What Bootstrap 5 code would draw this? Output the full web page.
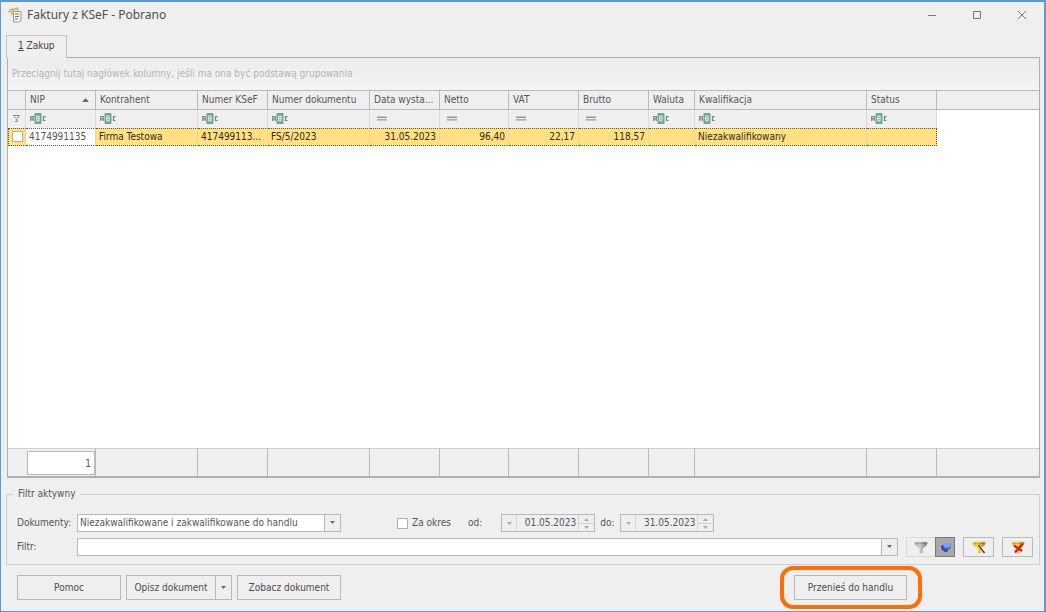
<!DOCTYPE html>
<html lang="pl">
<head>
<meta charset="utf-8">
<meta name="viewport" content="width=device-width, initial-scale=1">
<title>Faktury z KSeF - Pobrano</title>
<link href="https://cdn.jsdelivr.net/npm/bootstrap@5.3.0/dist/css/bootstrap.min.css" rel="stylesheet">
<style>
:root{--face:#efefef;--line:#b9b9b9;--ink:#555}
body{font:10px/14px "DejaVu Sans Condensed","DejaVu Sans",sans-serif;color:var(--ink);background:var(--face)}
.window{background:var(--face);border:1px solid #5b9bd0;border-top-width:2px;border-right-width:2px;min-height:100vh}
.titlebar{height:25px;padding:0 0 0 7px}
.titlebar h1{font:12px/16px "Noto Sans",sans-serif;color:#505050}
.titlebar button{width:45px;height:25px;border:0;background:none;padding:0}
.tabs{padding-left:5px;margin-bottom:-1px;position:relative;z-index:1}
.tabs .nav-link{border:1px solid #c4c4c4;border-bottom:0;border-radius:0;background:var(--face);color:#444;padding:0 11px;width:61px;height:23px;line-height:20px;white-space:nowrap}
.grid-box{border:1px solid #b0b0b0;border-bottom-width:2px;background:#fff;margin:0 4px 0 6px}
.group-panel{height:32px;line-height:32px;padding-left:4px;color:#b4b4b4;background:linear-gradient(#ececec,#f4f4f4)}
.data-grid{table-layout:fixed;width:100%;border-collapse:separate;border-spacing:0}
.data-grid th,.data-grid td{font-weight:400;padding:0 3px;white-space:nowrap;overflow:hidden;text-overflow:ellipsis}
.data-grid thead th{height:20px;background:var(--face);border:solid var(--line);border-width:1px 1px 1px 0;padding:0 2px 1px 4px}
.data-grid thead th:last-child{border-right:0}
.filter-row td{height:18px;background:var(--face);border-right:1px solid #dadada;padding-left:4px;padding-bottom:1px;line-height:0}
.filter-row td:last-child,.picked td:last-child{background:#fff;border:0}
.picked td{height:18px;color:#33290f;background:#ffe083;border-right:1px solid #e8d7a0;border-top:1px dotted #6b5a20;border-bottom:1px dotted #6b5a20;padding-bottom:1px}
.picked td.focus-cell{background:#fff;color:var(--ink)}
.picked td:nth-last-child(2){border-right:1px dotted #6b5a20}
.picked td:first-child{border-left:1px dotted #6b5a20}
.sum-row td{height:28px;background:var(--face);border-right:1px solid var(--line);border-top:1px solid #cfcfcf}
.sum-row td:last-child{border-right:0}
.sum-row td.sum-cell{padding:0 0 0 1px}
.sum-value{display:block;height:24px;line-height:23px;border:1px solid var(--line);background:#fff;text-align:right;padding-right:3px}
.tick{appearance:none;width:11px;height:11px;margin:0;border:1px solid #b0b0b0;background:#fff;flex:none;display:block}
.tick:checked{background:#5b9bd0}
.filters{border:1px solid #d0d0d0;margin:9px 4px 0 5px;padding:0 6px 7px 10px}
.filters legend{float:none;width:auto;font-size:10px;line-height:14px;margin:-1px 0 0 -4px;padding:0 5px 0 5px}
.docs-row{margin:13px 0 5px}
.field-label{width:60px;flex:none}
.pick{appearance:none;height:18px;border:1px solid var(--line);border-radius:0;color:var(--ink);padding:0 18px 0 2px;background:#fff url("data:image/svg+xml,%3Csvg xmlns='http://www.w3.org/2000/svg' width='16' height='16'%3E%3Cpath fill='%23efefef' d='M0 0h16v16H0z'/%3E%3Cpath fill='%23b9b9b9' d='M0 0h1v16H0z'/%3E%3Cpath fill='%23666' d='M6 6h5L8.500 9z'/%3E%3C/svg%3E") no-repeat right center}
.pick-docs{width:264px}
.date-box{width:94px;height:18px;border:1px solid var(--line)}
.date-box input{width:61px;min-width:0;border:0;background:none;color:var(--ink);padding:0 2px;text-align:right}
.date-box button{border:0;padding:0;background:none;width:15px;line-height:0}
.date-box .drop{border-right:1px solid #d6d6d6}
.spin{border-left:1px solid #d6d6d6}
.spin button{height:8px}
.spin button+button{border-top:1px solid #d0d0d0}
.from-label{margin:0 19px 0 17px}
.to-label{margin:0 6px 0 5px}
.cmd{border:1px solid var(--line);border-radius:0;background:var(--face);color:#4c4c4c;height:25px;padding:0;font-size:10px;line-height:14px}
.tool{width:31px;height:20px;line-height:0}
.tool.pale{border-color:#d9d9d9;border-right:0;width:29px}
.tool.held{width:20px;background:#a9a9a9;border-color:#777}
.actions{padding:1px 122px 2px 16px}
.btn-set{gap:5px}
.highlight{border:4px solid #ff6d05;border-radius:13px;padding:5px 11px 5px 10px}
.w-help{width:104px}.w-split{width:89px}.w-arrow{width:17px}.w-move{width:113px}
</style>
</head>
<body>
<svg width="0" height="0" class="position-absolute" aria-hidden="true">
<defs>
<symbol id="abc" viewBox="0 0 16 11"><rect x="4.500" width="7" height="11" rx="1" fill="#6fa593"/><g fill="none" stroke-width="1"><path stroke="#808080" stroke-width="1.200" d="M.7 8V3.500h2.600V8M.7 5.800h2.600M15.500 3.600h-2v3.900h2"/><path stroke="#e4f2ec" d="M6.700 3v5h2.400V3zM6.700 5.500h2.400"/></g></symbol>
<symbol id="eq" viewBox="0 0 16 11"><path fill="#999" d="M3 3.500h10v1.400H3zM3 6.200h10v1.400H3z"/></symbol>
<symbol id="down" viewBox="0 0 5 3"><path d="M0 0h5L2.500 3z"/></symbol>
<symbol id="up" viewBox="0 0 5 3"><path d="M0 3h5L2.500 0z"/></symbol>
<linearGradient id="gold"><stop stop-color="#f2b421"/><stop offset=".45" stop-color="#ffd952"/><stop offset="1" stop-color="#b06d08"/></linearGradient>
<linearGradient id="steel"><stop stop-color="#a8a8a8"/><stop offset=".4" stop-color="#cdcdcd"/><stop offset="1" stop-color="#777"/></linearGradient>
<symbol id="funnel" viewBox="0 0 14 13"><path d="M.5 2Q.5.500 7 .5t6.500 1.500Q13.500 4 8.800 7.500V12l-3.200.800V7.500Q.5 4 .5 2z"/><path d="M2 2.100Q7 3.400 12 2.100" fill="none" stroke="#000" stroke-opacity=".25" stroke-width=".8"/></symbol>
</defs>
</svg>
<div class="window d-flex flex-column">
<header class="titlebar d-flex align-items-center">
<svg class="me-1" width="15" height="16" viewBox="0 0 15 16"><path d="M5.500 4.500h7.500v9L11 15H5.500z" fill="#f5f5f5" stroke="#989898"/><path d="M7 7h4M7 9.500h4M7 12h3" stroke="#777"/><path d="M.8 5.500C2 2.500 4 1.500 6 2.500L9 1.200l1.500 2.300M4 3.500v3l2-3" fill="none" stroke="#d6b271" stroke-width="1.800"/></svg>
<h1 class="m-0 me-auto">Faktury z KSeF - Pobrano</h1>
<button type="button" aria-label="Minimalizuj"><svg width="10" height="10"><path d="M1 5.500h8" stroke="#777"/></svg></button>
<button type="button" aria-label="Maksymalizuj"><svg width="10" height="10"><path d="M1.500 1.500h7v7h-7z" fill="none" stroke="#777"/></svg></button>
<button type="button" aria-label="Zamknij"><svg width="10" height="10"><path d="M1 1l8 8M9 1L1 9" stroke="#777"/></svg></button>
</header>
<nav class="tabs nav mt-1 pt-1"><a class="nav-link active" href="#zakup"><u>1</u> Zakup</a></nav>
<main id="zakup" class="grid-box d-flex flex-column flex-grow-1">
<div class="group-panel">Przeciągnij tutaj nagłówek kolumny, jeśli ma ona być podstawą grupowania</div>
<table class="data-grid">
<colgroup><col style="width:18px"><col style="width:70px"><col style="width:102px"><col style="width:70px"><col style="width:102px"><col style="width:70px"><col style="width:69px"><col style="width:70px"><col style="width:70px"><col style="width:46px"><col style="width:172px"><col style="width:70px"><col></colgroup>
<thead><tr><th></th><th><span class="d-flex align-items-center justify-content-between">NIP<svg class="me-1" width="7" height="4" fill="#666"><use href="#up"/></svg></span></th><th>Kontrahent</th><th>Numer KSeF</th><th>Numer dokumentu</th><th>Data wysta...</th><th>Netto</th><th>VAT</th><th>Brutto</th><th>Waluta</th><th>Kwalifikacja</th><th>Status</th><th></th></tr></thead>
<tbody>
<tr class="filter-row"><td><svg width="9" height="9" viewBox="0 0 9 9"><path d="M1 1.500h6.500L5 4.500V7M2 2.500l2.500 2.500M3 7.500h2.500" fill="none" stroke="#888"/></svg></td><td><svg width="16" height="11"><use href="#abc"/></svg></td><td><svg width="16" height="11"><use href="#abc"/></svg></td><td><svg width="16" height="11"><use href="#abc"/></svg></td><td><svg width="16" height="11"><use href="#abc"/></svg></td><td><svg width="16" height="11"><use href="#eq"/></svg></td><td><svg width="16" height="11"><use href="#eq"/></svg></td><td><svg width="16" height="11"><use href="#eq"/></svg></td><td><svg width="16" height="11"><use href="#eq"/></svg></td><td><svg width="16" height="11"><use href="#abc"/></svg></td><td><svg width="16" height="11"><use href="#abc"/></svg></td><td><svg width="16" height="11"><use href="#abc"/></svg></td><td></td></tr>
<tr class="picked"><td><input type="checkbox" class="tick" aria-label="Zaznacz fakturę"></td><td class="focus-cell">4174991135</td><td>Firma Testowa</td><td>417499113...</td><td>FS/5/2023</td><td class="text-end">31.05.2023</td><td class="text-end">96,40</td><td class="text-end">22,17</td><td class="text-end">118,57</td><td></td><td>Niezakwalifikowany</td><td></td><td></td></tr>
</tbody>
</table>
<table class="data-grid mt-auto">
<colgroup><col style="width:18px"><col style="width:70px"><col style="width:102px"><col style="width:70px"><col style="width:102px"><col style="width:70px"><col style="width:69px"><col style="width:70px"><col style="width:70px"><col style="width:46px"><col style="width:172px"><col style="width:70px"><col></colgroup>
<tbody><tr class="sum-row"><td class="border-end-0"></td><td class="sum-cell"><span class="sum-value">1</span></td><td></td><td></td><td></td><td></td><td></td><td></td><td></td><td></td><td></td><td></td><td></td></tr></tbody>
</table>
</main>
<form>
<fieldset class="filters">
<legend>Filtr aktywny</legend>
<div class="docs-row d-flex align-items-center">
<label class="field-label" for="docs">Dokumenty:</label>
<select id="docs" class="pick pick-docs"><option>Niezakwalifikowane i zakwalifikowane do handlu</option></select>
<div class="d-flex align-items-center gap-1 ms-5 ps-2"><input type="checkbox" class="tick" id="period"><label for="period">Za okres</label></div>
<label class="from-label" for="from">od:</label>
<div class="date-box d-flex"><button type="button" class="drop" disabled aria-label="Kalendarz od"><svg width="5" height="3" fill="#aaa"><use href="#down"/></svg></button><input id="from" type="text" value="01.05.2023" disabled><span class="spin d-flex flex-column"><button type="button" disabled aria-label="Następny dzień"><svg width="5" height="3" fill="#aaa"><use href="#up"/></svg></button><button type="button" disabled aria-label="Poprzedni dzień"><svg width="5" height="3" fill="#aaa"><use href="#down"/></svg></button></span></div>
<label class="to-label" for="to">do:</label>
<div class="date-box d-flex"><button type="button" class="drop" disabled aria-label="Kalendarz do"><svg width="5" height="3" fill="#aaa"><use href="#down"/></svg></button><input id="to" type="text" value="31.05.2023" disabled><span class="spin d-flex flex-column"><button type="button" disabled aria-label="Następny dzień"><svg width="5" height="3" fill="#aaa"><use href="#up"/></svg></button><button type="button" disabled aria-label="Poprzedni dzień"><svg width="5" height="3" fill="#aaa"><use href="#down"/></svg></button></span></div>
</div>
<div class="d-flex align-items-center">
<label class="field-label" for="filter">Filtr:</label>
<select id="filter" class="pick flex-grow-1 me-2"><option></option></select>
<div class="d-flex me-2"><button type="button" class="cmd tool pale" aria-label="Filtruj"><svg width="14" height="13" fill="url(#steel)"><use href="#funnel"/></svg></button><button type="button" class="cmd tool held" aria-label="Przypnij filtr"><svg width="13" height="12" viewBox="0 0 13 12"><path d="M1 7.500l3-1" stroke="#ddd" stroke-width="1.500"/><ellipse cx="5.500" cy="7.500" rx="2.600" ry="4.200" transform="rotate(-50 5.500 7.500)" fill="#2d50a8"/><ellipse cx="8" cy="5.500" rx="3.800" ry="3.300" fill="#3c5fc4"/><ellipse cx="8" cy="4.300" rx="3.600" ry="2.700" fill="#7c9dfa"/></svg></button></div>
<button type="button" class="cmd tool me-2" aria-label="Konstruktor filtra"><svg width="14" height="13" viewBox="0 0 14 13"><use href="#funnel" width="14" height="13" fill="url(#gold)"/><path d="M6.500 4L12.500 12" stroke="#4a4030" stroke-width="1.600"/><path d="M8.500 5l4 5" stroke="#fff" stroke-width=".8"/></svg></button>
<button type="button" class="cmd tool" aria-label="Wyczyść filtr"><svg width="14" height="13" viewBox="0 0 14 13"><use href="#funnel" width="14" height="13" fill="url(#gold)"/><path d="M3 4.500l8 5.500M11.500 3L4 11.500" stroke="#e01313" stroke-width="2.200"/></svg></button>
</div>
</fieldset>
<div class="actions btn-set d-flex align-items-center">
<button type="button" class="cmd w-help">Pomoc</button>
<div class="d-flex"><button type="button" class="cmd w-split border-end-0">Opisz dokument</button><button type="button" class="cmd w-arrow" aria-label="Więcej opcji"><svg class="d-block mx-auto" width="5" height="3" fill="#666"><use href="#down"/></svg></button></div>
<button type="button" class="cmd w-help me-auto">Zobacz dokument</button>
<div class="highlight"><button type="button" class="cmd w-move d-block">Przenieś do handlu</button></div>
</div>
</form>
</div>
<script src="https://cdn.jsdelivr.net/npm/bootstrap@5.3.0/dist/js/bootstrap.bundle.min.js"></script>
</body>
</html>
